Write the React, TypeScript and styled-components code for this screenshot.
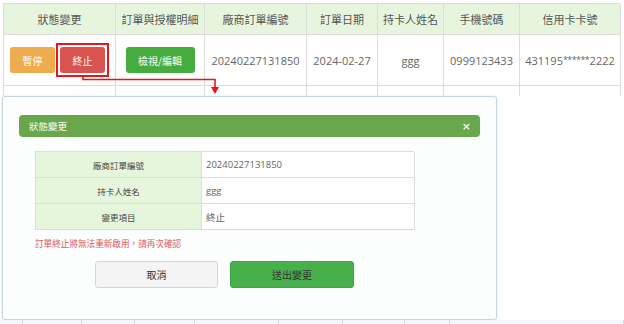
import React from "react";
import styled, { createGlobalStyle } from "styled-components";

const GlobalStyle = createGlobalStyle`
  html, body {
    margin: 0;
    padding: 0;
    background: #ffffff;
    overflow: hidden;
  }
  body {
    font-family: "Open Sans", "Noto Sans CJK TC", sans-serif;
  }
`;

const Page = styled.div`
  position: relative;
  width: 624px;
  height: 324px;
  padding-top: 3px;
  box-sizing: border-box;
  display: flex;
  flex-direction: column;
`;

const COLS = "112px 89px 102px 71px 66px 76px 101px";

const Grid = styled.div`
  display: grid;
  grid-template-columns: ${COLS};
  margin-left: 3px;
  border-top: 1px solid #dcdcdc;
  border-left: 1px solid #dcdcdc;
  width: 617px;
  box-sizing: border-box;
`;

const HeadCell = styled.div`
  height: 30px;
  background: #e7f5de;
  border-right: 1px solid #dcdcdc;
  border-bottom: 1px solid #dcdcdc;
  display: flex;
  align-items: center;
  justify-content: center;
  font-size: 11px;
  color: #555;
`;

const Cell = styled.div<{ $tail?: boolean }>`
  height: ${(p) => (p.$tail ? "10px" : "50px")};
  background: #fff;
  border-right: 1px solid #dcdcdc;
  border-bottom: ${(p) => (p.$tail ? "none" : "1px solid #dcdcdc")};
  display: flex;
  align-items: center;
  justify-content: center;
  font-size: 11px;
  color: #666;
  white-space: nowrap;
`;

const Stars = styled.span`
  font-size: 9px;
  letter-spacing: -0.6px;
  margin-right: 0.5px;
  position: relative;
  top: -1px;
`;

const ActionBtn = styled.button<{ $color: string; $w: number }>`
  width: ${(p) => p.$w}px;
  height: 26px;
  border: none;
  border-radius: 3px;
  background: ${(p) => p.$color};
  color: #fff;
  font-family: "Noto Sans CJK TC", sans-serif;
  font-size: 10px;
  padding: 0;
`;

const Highlight = styled.span`
  display: inline-flex;
  border: 2px solid #e5161c;
  padding: 2px;
  margin-left: 1px;
`;

const Modal = styled.div`
  margin-left: 2px;
  width: 495px;
  height: 225px;
  box-sizing: border-box;
  border: 1px solid #c7d5e2;
  border-radius: 3px;
  background: #fcfdfd;
  display: flex;
  flex-direction: column;
  padding: 18px 16px 0 16px;
  box-shadow: 0 0 2px rgba(120, 140, 160, 0.25);
`;

const ModalHeader = styled.div`
  height: 22px;
  border-radius: 4px;
  background: #69a74c;
  display: flex;
  align-items: center;
  justify-content: space-between;
  padding: 0 9px 0 10px;
  color: #fff;
  font-family: "Noto Sans CJK TC", sans-serif;
  font-size: 9.5px;
`;

const Close = styled.span`
  font-family: "DejaVu Sans", sans-serif;
  font-weight: bold;
  font-size: 11px;
  color: #eef3ea;
`;

const ModalBody = styled.div`
  padding: 14px 0 0 16px;
  display: flex;
  flex-direction: column;
  width: 379px;
  box-sizing: content-box;
`;

const InfoTable = styled.div`
  display: grid;
  grid-template-columns: 166px 213px;
  border-top: 1px solid #dddddd;
  border-left: 1px solid #dddddd;
  width: 379px;
  box-sizing: border-box;
`;

const InfoLabel = styled.div`
  height: 25px;
  background: #e6f6dc;
  border-right: 1px solid #dddddd;
  border-bottom: 1px solid #dddddd;
  display: flex;
  align-items: center;
  justify-content: center;
  font-family: "Noto Sans CJK TC", sans-serif;
  font-size: 8.5px;
  color: #444;
`;

const InfoValue = styled.div`
  height: 25px;
  background: #fff;
  border-right: 1px solid #dddddd;
  border-bottom: 1px solid #dddddd;
  display: flex;
  align-items: center;
  padding-left: 4px;
  font-size: 9.5px;
  color: #666;
`;

const Warning = styled.div`
  margin-top: 7px;
  line-height: 12px;
  font-family: "Noto Sans CJK TC", sans-serif;
  font-size: 8.6px;
  color: #e05a5a;
`;

const Buttons = styled.div`
  margin-top: 12px;
  display: flex;
  justify-content: center;
  gap: 12px;
`;

const FooterBtn = styled.button<{ $primary?: boolean }>`
  width: ${(p) => (p.$primary ? "124px" : "123px")};
  height: 27px;
  border-radius: 3px;
  border: 1px solid ${(p) => (p.$primary ? "#3ea642" : "#d6d6d6")};
  background: ${(p) => (p.$primary ? "#47b04a" : "#f4f4f4")};
  color: #333;
  font-family: "Noto Sans CJK TC", sans-serif;
  font-size: 10px;
  padding: 0;
`;

const BackStrip = styled.div`
  height: 4px;
  display: grid;
  grid-template-columns: 23px 59px 53px 60px 84px 64px 62px 45px 1fr;
  background: #f4f6f8;
`;

const BackCell = styled.div`
  border-right: 1px solid #d5dbe1;
`;

const Connector = styled.svg`
  position: absolute;
  left: 0;
  top: 0;
  pointer-events: none;
`;

const heads = ["狀態變更", "訂單與授權明細", "廠商訂單編號", "訂單日期", "持卡人姓名", "手機號碼", "信用卡卡號"];

const info = [
  ["廠商訂單編號", "20240227131850"],
  ["持卡人姓名", "ggg"],
  ["變更項目", "終止"],
];

export default function App() {
  return (
    <>
      <GlobalStyle />
      <Page>
        <Grid>
          {heads.map((h) => (
            <HeadCell key={h}>{h}</HeadCell>
          ))}
          <Cell>
            <ActionBtn $color="#efac4e" $w={45}>暫停</ActionBtn>
            <Highlight>
              <ActionBtn $color="#d9534f" $w={45}>終止</ActionBtn>
            </Highlight>
          </Cell>
          <Cell>
            <ActionBtn $color="#45ad40" $w={69}>檢視/編輯</ActionBtn>
          </Cell>
          <Cell>20240227131850</Cell>
          <Cell>2024-02-27</Cell>
          <Cell>ggg</Cell>
          <Cell>0999123433</Cell>
          <Cell>
            431195<Stars>******</Stars>2222
          </Cell>
          {heads.map((h) => (
            <Cell key={"t" + h} $tail />
          ))}
        </Grid>
        <Modal>
          <ModalHeader>
            <span>狀態變更</span>
            <Close>×</Close>
          </ModalHeader>
          <ModalBody>
            <InfoTable>
              {info.map(([k, v]) => (
                <React.Fragment key={k}>
                  <InfoLabel>{k}</InfoLabel>
                  <InfoValue>{v}</InfoValue>
                </React.Fragment>
              ))}
            </InfoTable>
            <Warning>訂單終止將無法重新啟用，請再次確認</Warning>
            <Buttons>
              <FooterBtn>取消</FooterBtn>
              <FooterBtn $primary>送出變更</FooterBtn>
            </Buttons>
          </ModalBody>
        </Modal>
        <BackStrip>
          {Array.from({ length: 9 }).map((_, i) => (
            <BackCell key={i} />
          ))}
        </BackStrip>
        <Connector width="624" height="324" viewBox="0 0 624 324">
          <path d="M83 77 V79.5 H215 V88" fill="none" stroke="#e5161c" strokeWidth="1.6" />
          <path d="M211 87 H219 L215 94 Z" fill="#e5161c" />
        </Connector>
      </Page>
    </>
  );
}
